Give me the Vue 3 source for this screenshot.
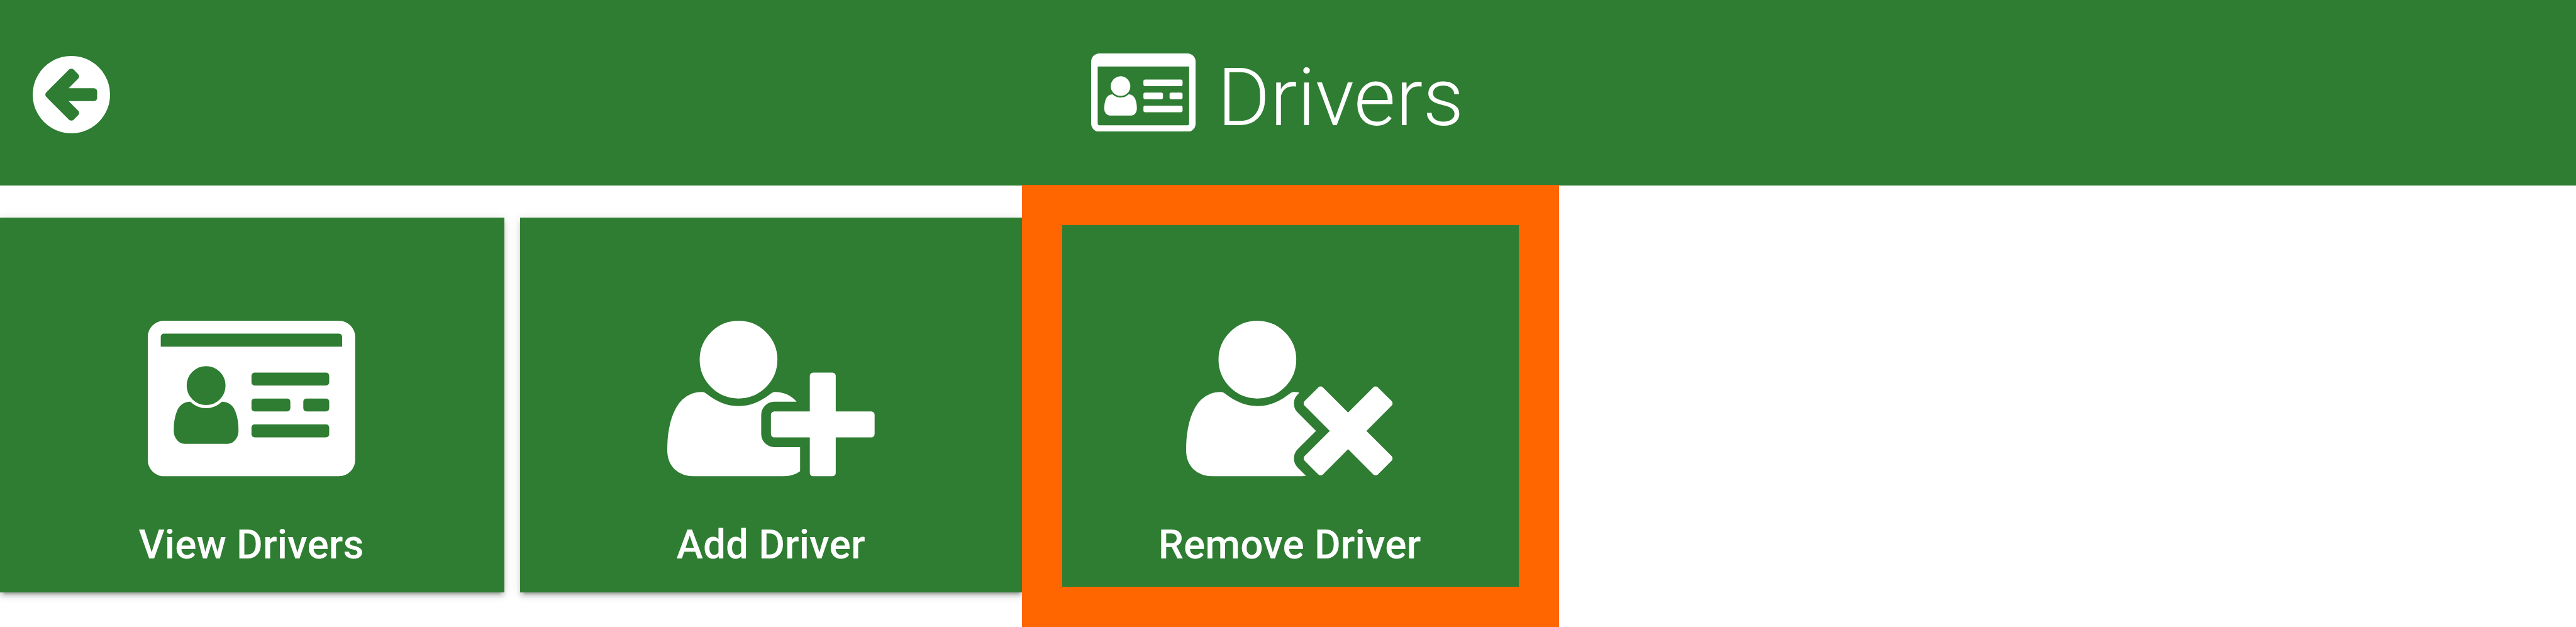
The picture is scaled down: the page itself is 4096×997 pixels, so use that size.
<script setup>
const person =
  'M704 896q-159 0-271.5-112.5T320 512t112.5-271.5T704 128t271.5 112.5T1088 512 975.5 783.5 704 896z'

const cardDetails =
  'M896 1212q0-54-7.5-100.5t-24.5-90-51-68.5-81-25q-64 64-156 64t-156-64q-47 0-81 25t-51 68.5-24.5 90T256 1212q0 55 31.5 93.5T363 1344h426q44 0 75.5-38.5T896 1212z' +
  'M768 768q0-80-56-136t-136-56-136 56-56 136 56 136 136 56 136-56 56-136z' +
  'M1792 1248v-64q0-14-9-23t-23-9h-704q-14 0-23 9t-9 23v64q0 14 9 23t23 9h704q14 0 23-9t9-23z' +
  'M1408 992v-64q0-14-9-23t-23-9h-320q-14 0-23 9t-9 23v64q0 14 9 23t23 9h320q14 0 23-9t9-23z' +
  'M1792 992v-64q0-14-9-23t-23-9h-192q-14 0-23 9t-9 23v64q0 14 9 23t23 9h192q14 0 23-9t9-23z' +
  'M1792 736v-64q0-14-9-23t-23-9h-704q-14 0-23 9t-9 23v64q0 14 9 23t23 9h704q14 0 23-9t9-23z'

const cardFrame =
  'M2048 288v1216q0 66-47 113t-113 47H160q-66 0-113-47T0 1504V288q0-66 47-113t113-47h1728q66 0 113 47t47 113z'

const icons = {
  back: 'M1280 832V704q0-26-19-45t-45-19H714l189-189q19-19 19-45t-19-45l-91-91q-18-18-45-18t-45 18L360 632l-91 91q-18 18-18 45t18 45l91 91 362 362q18 18 45 18t45-18l91-91q18-18 18-45t-18-45L714 896h502q26 0 45-19t19-45zM1536 768q0 209-103 385.5T1153.5 1433 768 1536t-385.5-103T103 1153.5 0 768t103-385.5T382.5 103 768 0t385.5 103T1433 382.5 1536 768z',
  cardOutline:
    cardFrame +
    'M1920 1504V384H128v1120q0 13 9.5 22.5t22.5 9.5h1728q13 0 22.5-9.5t9.5-22.5z' +
    cardDetails,
  card:
    cardFrame +
    'M128 384h1792v-96q0-14-9-23t-23-9H160q-14 0-23 9t-9 23v96z' +
    cardDetails,
  userPlus:
    person +
    'M1664 1024h352q13 0 22.5 9.5t9.5 22.5v192q0 13-9.5 22.5t-22.5 9.5h-352v352q0 13-9.5 22.5t-22.5 9.5h-192q-13 0-22.5-9.5t-9.5-22.5v-352h-352q-13 0-22.5-9.5t-9.5-22.5v-192q0-13 9.5-22.5t22.5-9.5h352V672q0-13 9.5-22.5t22.5-9.5h192q13 0 22.5 9.5t9.5 22.5v352zm-736 224q0 52 38 90t90 38h256v238q-68 50-171 50H267q-121 0-194-69T0 1405q0-53 3.5-103.5t14-109T45 1084t43-97.5 62-81 85.5-53.5T347 832q19 0 39 17 79 61 154.5 91.5T704 971t163.5-30.5T1022 849q20-17 39-17 132 0 217 96h-222q-52 0-90 38t-38 90v192z',
  userTimes:
    person +
    'M1781 1216l249 249q9 9 9 23 0 13-9 22l-136 136q-9 9-22 9-14 0-23-9l-249-249-249 249q-9 9-23 9-13 0-22-9l-136-136q-9-9-9-22 0-14 9-23l249-249-249-249q-9-9-9-23 0-13 9-22l136-136q9-9 22-9 14 0 23 9l249 249 249-249q9-9 23-9 13 0 22 9l136 136q9 9 9 22 0 14-9 23zm-498 0l-181 181q-37 37-37 91 0 53 37 90l83 83q-21 3-44 3H267q-121 0-194-69T0 1405q0-53 3.5-103.5t14-109T45 1084t43-97.5 62-81 85.5-53.5T347 832q19 0 39 17 154 122 319 122t318-122q20-17 39-17 28 0 57 6-28 27-41 50t-13 56q0 54 37 91z',
}

const tiles = [
  { label: 'View Drivers', icon: icons.card },
  { label: 'Add Driver', icon: icons.userPlus },
  { label: 'Remove Driver', icon: icons.userTimes, highlighted: true },
]
</script>

<template>
  <div class="page">
    <header class="bar">
      <button class="back" aria-label="Back">
        <svg viewBox="0 0 1536 1536"><path fill-rule="evenodd" :d="icons.back" /></svg>
      </button>
      <h1 class="title">
        <svg viewBox="0 128 2048 1536"><path fill-rule="evenodd" :d="icons.cardOutline" /></svg>
        <span>Drivers</span>
      </h1>
    </header>
    <main class="tiles">
      <div v-for="tile in tiles" :key="tile.label" class="tile">
        <svg viewBox="0 128 2048 1536"><path fill-rule="evenodd" :d="tile.icon" /></svg>
        <span class="label">{{ tile.label }}</span>
        <div v-if="tile.highlighted" class="highlight"></div>
      </div>
    </main>
  </div>
</template>

<style>
body {
  margin: 0;
  background: #fff;
}
</style>

<style scoped>
.page {
  width: 4096px;
  height: 997px;
  overflow: hidden;
  background: #fff;
  font-family: Roboto, "Liberation Sans", sans-serif;
  color: #fff;
}
svg {
  display: block;
  fill: #fff;
}
.bar {
  display: grid;
  grid-template-columns: 1734.5px 1fr;
  height: 295px;
  background: #2e7d32;
}
.back {
  margin: 0;
  padding: 88.8px 0 0 52.2px;
  border: 0;
  background: none;
  text-align: left;
  display: flex;
  align-items: flex-start;
}
.back svg {
  width: 123px;
  height: 123px;
}
.title {
  margin: 0;
  padding-top: 84.6px;
  display: flex;
  align-items: flex-start;
  gap: 34.8px;
  font-size: 128px;
  font-weight: 300;
  line-height: 140px;
  letter-spacing: 0.2px;
}
.title svg {
  width: 166.2px;
  height: 124.6px;
}
.tiles {
  display: grid;
  grid-template-columns: 802px 800px 800px;
  gap: 25px;
  padding-top: 51px;
}
.tile {
  position: relative;
  box-sizing: border-box;
  height: 596px;
  padding-top: 164.3px;
  display: flex;
  flex-direction: column;
  align-items: center;
  background: #2e7d32;
  box-shadow: 0 9.6px 3.2px -6.4px rgba(0, 0, 0, 0.2),
    0 6.4px 6.4px rgba(0, 0, 0, 0.14), 0 3.2px 16px rgba(0, 0, 0, 0.12);
}
.tile svg {
  width: 329.7px;
  height: 247.3px;
  margin-right: 2px;
}
.label {
  margin-top: 69px;
  margin-right: 3px;
  font-size: 64px;
  font-weight: 500;
  line-height: 80px;
  letter-spacing: 0.08px;
  white-space: nowrap;
}
.highlight {
  position: absolute;
  left: -27px;
  top: -52px;
  box-sizing: border-box;
  width: 854px;
  height: 703px;
  border: 64px solid #ff6600;
}
</style>
